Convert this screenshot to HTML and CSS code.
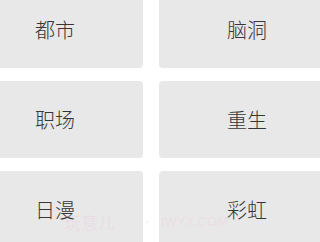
FILE: index.html
```html
<!DOCTYPE html>
<html lang="zh">
<head>
<meta charset="utf-8">
<link rel="stylesheet" href="styles.css">
</head>
<body>
<div class="grid">
  <div class="card">都市</div>
  <div class="card">脑洞</div>
  <div class="card">职场</div>
  <div class="card">重生</div>
  <div class="card">日漫</div>
  <div class="card">彩虹</div>
</div>
<div class="watermark"><span class="wm-cn">玩意儿</span><span class="wm-dot">•</span><span class="wm-en">IWYX.COM</span></div>
</body>
</html>
```
FILE: styles.css
```css
html, body {
  margin: 0;
  padding: 0;
  background: #ffffff;
  width: 320px;
  height: 242px;
  overflow: hidden;
}
body {
  position: relative;
  font-family: "Noto Sans CJK SC", "Noto Sans", sans-serif;
}
.grid {
  display: grid;
  grid-template-columns: 176px 176px;
  grid-auto-rows: 77px;
  column-gap: 16px;
  row-gap: 13px;
  margin-left: -33px;
  margin-top: -9px;
}
.card {
  background: #e8e8e8;
  border-radius: 4px;
  display: flex;
  align-items: center;
  justify-content: center;
  font-size: 20px;
  font-weight: 300;
  color: #363636;
}
.watermark {
  position: absolute;
  left: 64px;
  top: 209px;
  display: flex;
  align-items: center;
  font-size: 17px;
  color: rgba(245, 170, 215, 0.2);
  white-space: nowrap;
  pointer-events: none;
}
.wm-dot {
  margin: 0 8px 0 26px;
  font-size: 12px;
}
.wm-en {
  font-family: "Liberation Sans", sans-serif;
  font-size: 13px;
}
```
